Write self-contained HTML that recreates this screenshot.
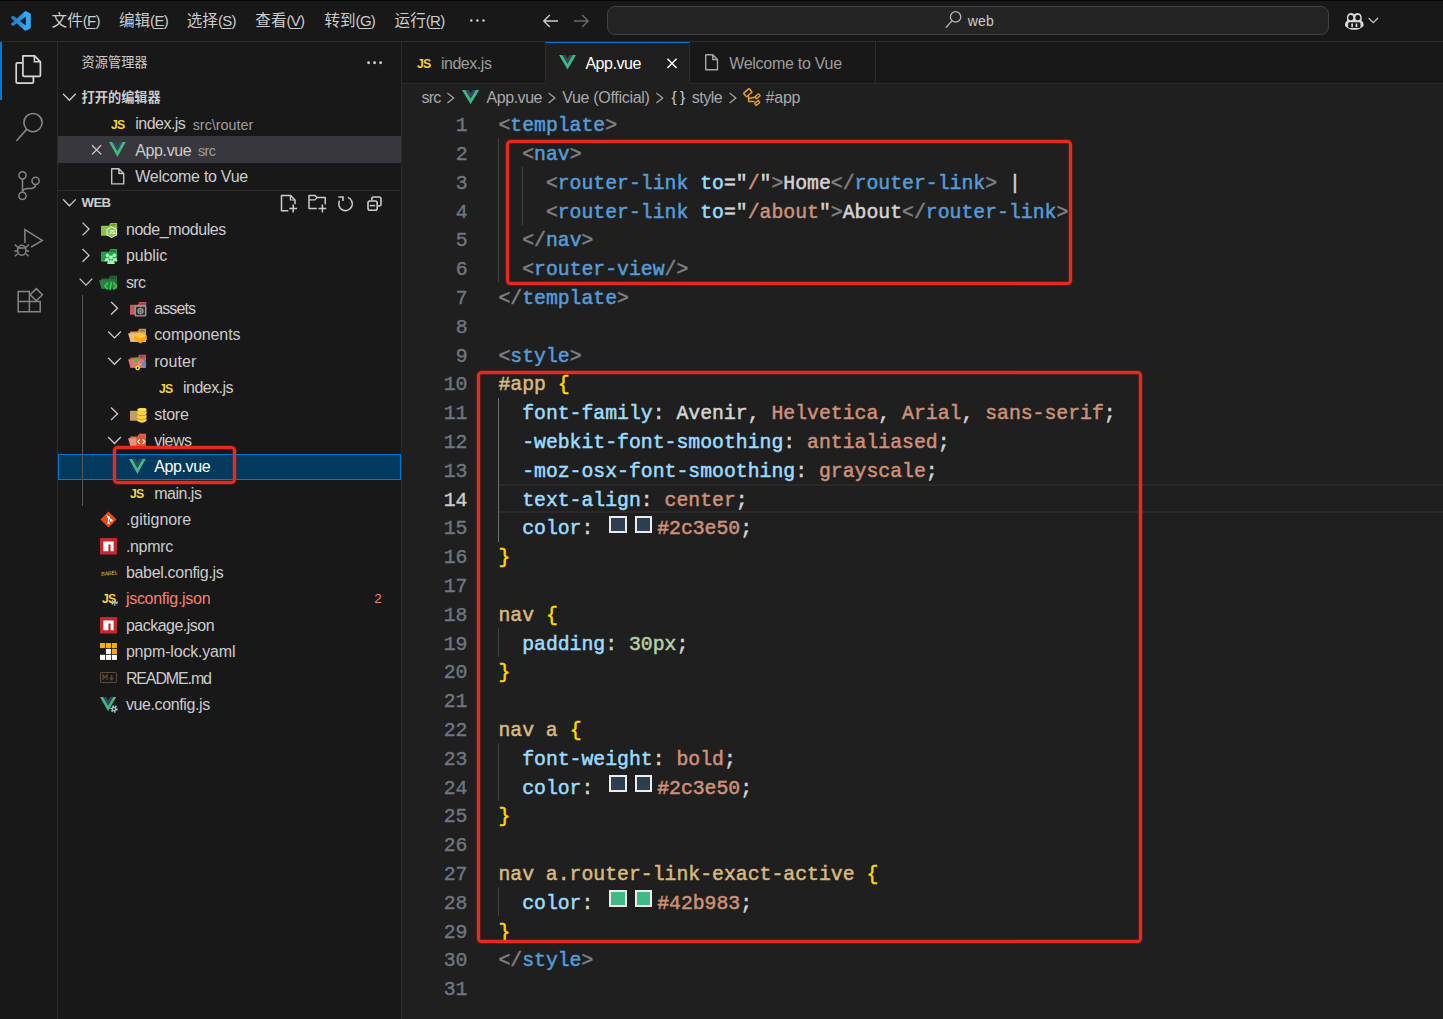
<!DOCTYPE html>
<html lang="zh-CN">
<head>
<meta charset="utf-8">
<title>App.vue - web - Visual Studio Code</title>
<style>
*{box-sizing:border-box}
html,body{margin:0;padding:0;background:#1f1f1f}
body{width:1443px;height:1019px;overflow:hidden;position:relative;font-family:"Liberation Sans","Noto Sans CJK SC",sans-serif;color:#ccc;font-size:15.2px;line-height:1}
.abs{position:absolute}
svg{display:block;overflow:visible;position:absolute}
#titlebar{position:absolute;left:0;top:0;width:1443px;height:42px;background:#181818;border-bottom:1px solid #2b2b2b;border-top:1px solid #050505}
.menu{position:absolute;top:0;height:40px;line-height:40.6px;font-size:15.6px;color:#ccc;white-space:nowrap}
.menu u{text-decoration-thickness:1px;text-underline-offset:2px}
#search{position:absolute;left:607px;top:5px;width:722px;height:29px;border:1px solid #424242;border-radius:8px;background:#242424}
#activity{position:absolute;left:0;top:42px;width:58px;height:977px;background:#181818;border-right:1px solid #2b2b2b}
#sidebar{position:absolute;left:58px;top:42px;width:344px;height:977px;background:#181818;border-right:1px solid #2b2b2b}
.row{position:absolute;left:0;width:343px;height:26.4px;line-height:28.4px;white-space:nowrap;color:#ccc}
.row span{position:absolute;top:0}
.row .desc{color:#9d9d9d;top:.7px}
.hdr{font-weight:bold;font-size:13.2px;color:#ccc}
#tabs{position:absolute;left:402px;top:42px;width:1041px;height:42px;background:#181818;border-bottom:1px solid #2b2b2b}
.tab{position:absolute;top:0;height:42px;border-right:1px solid #2b2b2b;border-bottom:1px solid #2b2b2b;line-height:43.4px;color:#9d9d9d;white-space:nowrap}
.tab span{position:absolute;top:0}
.tab.active{background:#1f1f1f;color:#fff;border-top:1px solid #0078d4;border-bottom:none;line-height:41.4px}
#crumbs{position:absolute;left:402px;top:84px;width:1041px;height:26px;background:#1f1f1f;color:#a9a9a9;line-height:27.4px;white-space:nowrap}
#crumbs span{position:absolute;top:0}
#code{position:absolute;left:402px;top:109.6px;width:1041px;height:910px;font-family:"Liberation Mono","DejaVu Sans Mono",monospace;font-size:19.8px}
.ln{-webkit-text-stroke:0.4px;position:absolute;left:0;width:65.5px;text-align:right;height:28.8px;line-height:28.8px;color:#6e7681}
.cl{-webkit-text-stroke:0.5px;position:absolute;left:96.4px;height:28.8px;line-height:28.8px;white-space:pre;color:#d4d4d4}
.g{color:#808080}.t{color:#569cd6}.a{color:#9cdcfe}.s{color:#ce9178}.y{color:#ffd700}.sel{color:#d7ba7d}.n{color:#b5cea8}.w{color:#d4d4d4}
.guide{position:absolute;width:1px;background:#404040}
.redbox{position:absolute;border:3.7px solid #e8291e;border-radius:4.5px;box-shadow:0 0 0 .7px rgba(232,41,30,.35),inset 0 0 0 .7px rgba(232,41,30,.35)}
.sw{display:inline-block;width:51.9px;height:1px}
.sw i{position:absolute;display:block;width:17.4px;height:17px;border:2px solid #ececec;top:0.6px}
</style>
</head>
<body>
<div id="titlebar"><svg style="left:10.8px;top:10.4px" width="19.8" height="19.8" viewBox="0 0 24 24" ><defs><linearGradient id="vsg" x1="0" y1="0" x2="1" y2="0"><stop offset="0" stop-color="#1a7fd0"/><stop offset=".55" stop-color="#2496e4"/><stop offset=".7" stop-color="#33a9f3"/><stop offset="1" stop-color="#33a9f3"/></linearGradient></defs><path d="M23.15 2.587L18.21.21a1.494 1.494 0 0 0-1.705.29l-9.46 8.63-4.12-3.128a.999.999 0 0 0-1.276.057L.327 7.261A1 1 0 0 0 .326 8.74L3.899 12 .326 15.26a1 1 0 0 0 .001 1.479L1.65 17.94a.999.999 0 0 0 1.276.057l4.12-3.128 9.46 8.63a1.492 1.492 0 0 0 1.704.29l4.942-2.377A1.5 1.5 0 0 0 24 20.06V3.939a1.5 1.5 0 0 0-.85-1.352zm-5.146 14.861L10.826 12l7.178-5.448v10.896z" fill="url(#vsg)"/></svg><div class="menu" style="left:51.6px">文件<span style="font-size:15px;letter-spacing:-0.7px">(<u>F</u>)</span></div><div class="menu" style="left:118.9px">编辑<span style="font-size:15px;letter-spacing:-0.7px">(<u>E</u>)</span></div><div class="menu" style="left:186.7px">选择<span style="font-size:15px;letter-spacing:-0.7px">(<u>S</u>)</span></div><div class="menu" style="left:255.3px">查看<span style="font-size:15px;letter-spacing:-0.7px">(<u>V</u>)</span></div><div class="menu" style="left:324.4px">转到<span style="font-size:15px;letter-spacing:-0.7px">(<u>G</u>)</span></div><div class="menu" style="left:394.6px">运行<span style="font-size:15px;letter-spacing:-0.7px">(<u>R</u>)</span></div><svg style="left:0px;top:0px" width="1" height="1" viewBox="0 0 1 1" ><circle cx="471.3" cy="19.5" r="1.25" fill="#ccc"/><circle cx="477.4" cy="19.5" r="1.25" fill="#ccc"/><circle cx="483.5" cy="19.5" r="1.25" fill="#ccc"/></svg><svg style="left:0px;top:0px" width="1" height="1" viewBox="0 0 1 1" ><path d="M558 20 H544 M549.8 14 L543.8 20 L549.8 26" fill="none" stroke="#ccc" stroke-width="1.4"/><path d="M574 20 H588 M582.2 14 L588.2 20 L582.2 26" fill="none" stroke="#6a6a6a" stroke-width="1.4"/></svg><div id="search"></div><svg style="left:0px;top:0px" width="1" height="1" viewBox="0 0 1 1" ><circle cx="955.6" cy="15.9" r="5.2" fill="none" stroke="#b4b4b4" stroke-width="1.3"/><path d="M951.9 19.9 L945.8 26.8" stroke="#b4b4b4" stroke-width="1.3"/></svg><div class="abs" style="left:967.7px;top:0;height:40px;line-height:40px;color:#ccc;font-size:14px;letter-spacing:0.206px">web</div><svg style="left:1343.8px;top:11.4px" width="20.6" height="18" viewBox="0 0 20 17.5" ><path d="M3 8.5 Q1 9.5 1 12 V13.5 Q5 17.3 10 17.3 Q15 17.3 19 13.5 V12 Q19 9.5 17 8.5 Q17.8 3.5 15.5 1.8 Q13 0 10 2.2 Q7 0 4.5 1.8 Q2.2 3.5 3 8.5 Z" fill="#d8d8d8"/><rect x="4.3" y="3" width="4.6" height="5" rx="2" fill="#181818"/><rect x="11.1" y="3" width="4.6" height="5" rx="2" fill="#181818"/><rect x="4" y="10" width="12" height="5.6" rx="1.5" fill="#181818"/><rect x="7.1" y="11.2" width="1.6" height="3.6" fill="#d8d8d8"/><rect x="11.3" y="11.2" width="1.6" height="3.6" fill="#d8d8d8"/></svg><svg style="left:0px;top:0px" width="1" height="1" viewBox="0 0 1 1" ><path d="M1369.05 17.44 L1373.30 21.76 L1377.55 17.44" fill="none" stroke="#ccc" stroke-width="1.2" stroke-linecap="square" stroke-linejoin="miter"/></svg></div>
<div id="activity"><div class="abs" style="left:0;top:0;width:2.4px;height:57.6px;background:#0078d4"></div><svg style="left:0px;top:0px" width="1" height="1" viewBox="0 0 1 1" ><path d="M22.9 13.8 H34.6 L40.4 19.8 V33.2 Q40.4 34.4 39.2 34.4 H24.1 Q22.9 34.4 22.9 33.2 Z" fill="none" stroke="#d7d7d7" stroke-width="1.7" stroke-linejoin="round"/><path d="M34.4 13.8 V19.8 H40.4" fill="none" stroke="#d7d7d7" stroke-width="1.5"/><path d="M22.6 20.8 H17.4 Q16.2 20.8 16.2 22 V39.9 Q16.2 41.1 17.4 41.1 H32.2 Q33.4 41.1 33.4 39.9 V34.4" fill="none" stroke="#d7d7d7" stroke-width="1.7"/></svg><svg style="left:0px;top:0px" width="1" height="1" viewBox="0 0 1 1" ><circle cx="33" cy="80.6" r="9.1" fill="none" stroke="#868686" stroke-width="1.6"/><path d="M26.6 87.4 L16.4 99" stroke="#868686" stroke-width="1.6"/></svg><svg style="left:0px;top:0px" width="1" height="1" viewBox="0 0 1 1" ><circle cx="22.5" cy="133.3" r="3.6" fill="none" stroke="#868686" stroke-width="1.5"/><circle cx="22.5" cy="153.8" r="3.6" fill="none" stroke="#868686" stroke-width="1.5"/><circle cx="35.6" cy="138.8" r="3.6" fill="none" stroke="#868686" stroke-width="1.5"/><path d="M22.5 136.9 V150.2 M35.6 142.4 Q35.6 146.6 29 146.6 Q22.5 146.6 22.5 150.2" fill="none" stroke="#868686" stroke-width="1.5"/></svg><svg style="left:0px;top:0px" width="1" height="1" viewBox="0 0 1 1" ><path d="M24.9 201 V187.6 L42.3 198.4 L31 205.2" fill="none" stroke="#868686" stroke-width="1.5" stroke-linejoin="miter"/><ellipse cx="21.8" cy="208.3" rx="4.2" ry="5" fill="none" stroke="#868686" stroke-width="1.5"/><path d="M17.6 206 H26 M17.6 205.2 L14.8 202.6 M26 205.2 L28.8 202.6 M17.4 209 H14.4 M26.2 209 H29.2 M17.8 211.8 L14.8 214.2 M25.8 211.8 L28.8 214.2" fill="none" stroke="#868686" stroke-width="1.4"/></svg><svg style="left:0px;top:0px" width="1" height="1" viewBox="0 0 1 1" ><path d="M18.2 249.4 H29.4 V259.6 H40.2 V269.8 H18.2 Z M18.2 259.6 H29.4 V269.8" fill="none" stroke="#868686" stroke-width="1.5"/><path d="M36.3 246.6 L42.4 252.7 L36.3 258.8 L30.2 252.7 Z" fill="none" stroke="#868686" stroke-width="1.5"/></svg></div>
<div id="sidebar"><div class="abs" style="left:23.6px;top:0;height:42px;line-height:41px;font-size:13.2px;color:#ccc">资源管理器</div><svg style="left:0px;top:0px" width="1" height="1" viewBox="0 0 1 1" ><circle cx="310.6" cy="20.7" r="1.45" fill="#ccc"/><circle cx="316.6" cy="20.7" r="1.45" fill="#ccc"/><circle cx="322.6" cy="20.7" r="1.45" fill="#ccc"/></svg><div class="abs" style="left:0;top:94px;width:343px;height:26.6px;background:#37373d"></div><div class="abs" style="left:0;top:411.8px;width:343px;height:26px;background:#04395e;border:1px solid #0078d4"></div><div class="abs" style="left:0;top:147.6px;width:343px;height:1px;background:#2b2b2b"></div><div class="abs" style="left:24.4px;top:253.0px;width:1px;height:211.2px;background:#585858"></div><svg style="left:0px;top:0px" width="1" height="1" viewBox="0 0 1 1" ><path d="M5.50 52.20 L11.40 58.20 L17.30 52.20" fill="none" stroke="#ccc" stroke-width="1.3" stroke-linecap="square" stroke-linejoin="miter"/></svg><div class="row " style="top:41.8px"><span class="hdr" style="left:23.6px">打开的编辑器</span></div><div class="row " style="top:68.2px"><span class="abs" style="left:52.7px;top:6.7px;height:16px;line-height:16px;font-weight:bold;font-size:13.4px;letter-spacing:-0.9px;color:#f5d33d;transform:scaleX(.92);transform-origin:0 0">JS</span><span class="" style="left:77.3px;font-size:16px;letter-spacing:-0.531px">index.js</span><span class="desc" style="left:134.7px;font-size:14.4px;letter-spacing:-0.012px">src\router</span></div><svg style="left:0px;top:0px" width="1" height="1" viewBox="0 0 1 1" ><path d="M34.00 103.20 L43.20 112.40 M43.20 103.20 L34.00 112.40" stroke="#ccc" stroke-width="1.3" fill="none"/></svg><svg style="left:51.2px;top:99.89999999999999px" width="16.8" height="15" viewBox="0 0 100 86" preserveAspectRatio="none"><path d="M0 0 L50 86 L100 0 L80 0 L50 52 L20 0 Z" fill="#41b883"/><path d="M20 0 L50 52 L80 0 L62 0 L50 21 L38 0 Z" fill="#35495e"/></svg><div class="row " style="top:94.6px"><span class="" style="left:77.3px;font-size:16px;letter-spacing:-0.387px">App.vue</span><span class="desc" style="left:140px;font-size:14.4px;letter-spacing:-0.632px">src</span></div><svg style="left:52.9px;top:125.79999999999998px" width="13.4" height="16.6" viewBox="0 0 13.4 16.6" ><path d="M0.7 0.7 H7.88 L12.7 5.52 V15.9 H0.7 Z M7.88 0.7 V5.52 H12.7" fill="none" stroke="#c5c5c5" stroke-width="1.4" stroke-linejoin="round"/></svg><div class="row " style="top:121.0px"><span class="" style="left:77.3px;font-size:16px;letter-spacing:-0.279px">Welcome to Vue</span></div><svg style="left:0px;top:0px" width="1" height="1" viewBox="0 0 1 1" ><path d="M5.50 157.80 L11.40 163.80 L17.30 157.80" fill="none" stroke="#ccc" stroke-width="1.3" stroke-linecap="square" stroke-linejoin="miter"/></svg><div class="row " style="top:147.4px"><span class="hdr" style="left:23.6px;font-size:13.2px;letter-spacing:-0.665px">WEB</span></div><svg style="left:0px;top:0px" width="1" height="1" viewBox="0 0 1 1" ><path d="M230.4 168.79999999999998 H223.5 V153.4 H232.4 L237 158.0 V162.2" fill="none" stroke="#ccc" stroke-width="1.5" stroke-linejoin="round"/><path d="M232.4 153.4 V158.0 H237" fill="none" stroke="#ccc" stroke-width="1.2"/><path d="M235.2 162.6 V170.4 M231.3 166.5 H239.1" stroke="#ccc" stroke-width="1.5"/></svg><svg style="left:0px;top:0px" width="1" height="1" viewBox="0 0 1 1" ><path d="M258.8 166.4 H251 V153.4 H257 L259 155.6 H267.2 V162.2" fill="none" stroke="#ccc" stroke-width="1.5" stroke-linejoin="round"/><path d="M251 157.79999999999998 H257 L259 155.6" fill="none" stroke="#ccc" stroke-width="1.2"/><path d="M264.4 162.6 V170.4 M260.5 166.5 H268.3" stroke="#ccc" stroke-width="1.5"/></svg><svg style="left:0px;top:0px" width="1" height="1" viewBox="0 0 1 1" ><path d="M289.8 155.4 A6.8 6.8 0 1 1 281.5 158.6" fill="none" stroke="#ccc" stroke-width="1.5"/><path d="M280.4 154.9 H285 V159.0" fill="none" stroke="#ccc" stroke-width="1.5"/></svg><svg style="left:0px;top:0px" width="1" height="1" viewBox="0 0 1 1" ><rect x="310" y="159" width="9.2" height="9.2" rx="2" fill="none" stroke="#ccc" stroke-width="1.6"/><path d="M311.8 163.6 H317.2" stroke="#ccc" stroke-width="1.5"/><path d="M313.8 158.6 V157 Q313.8 155 315.8 155 H321 Q323 155 323 157 V162 Q323 164 321 164 H319.8" fill="none" stroke="#ccc" stroke-width="1.6"/></svg><svg style="left:0px;top:0px" width="1" height="1" viewBox="0 0 1 1" ><path d="M25.00 181.10 L31.00 187.00 L25.00 192.90" fill="none" stroke="#ccc" stroke-width="1.3" stroke-linecap="square" stroke-linejoin="miter"/></svg><div class="row " style="top:173.8px"><span class="" style="left:67.9px;font-size:16px;letter-spacing:-0.414px">node_modules</span></div><svg style="left:43.1px;top:187.0px" width="1" height="1" viewBox="0 0 1 1" ><path d="M0.5 -3.2 H7.8 L9.4 -6 H15.7 Q16.2 -6 16.2 -5.5 V6.3 Q16.2 6.8 15.7 6.8 H0.5 Q0 6.8 0 6.3 V-2.7 Q0 -3.2 0.5 -3.2 Z" fill="#8bc34a"/><path d="M10.1 -5 H15.2 V-3.2 H9.1 Z" fill="rgba(0,0,0,.22)"/><path d="M10.7 -2.2 L15.4 0.5 V5.9 L10.7 8.6 L6 5.9 V0.5 Z" fill="#8bc34a" stroke="#eef6e4" stroke-width="1"/><text x="7.9" y="5.2" font-size="5.2" font-weight="bold" fill="#f4faee" font-family="Liberation Sans,sans-serif">JS</text></svg><svg style="left:0px;top:0px" width="1" height="1" viewBox="0 0 1 1" ><path d="M25.00 207.50 L31.00 213.40 L25.00 219.30" fill="none" stroke="#ccc" stroke-width="1.3" stroke-linecap="square" stroke-linejoin="miter"/></svg><div class="row " style="top:200.2px"><span class="" style="left:67.9px;font-size:16px;letter-spacing:-0.101px">public</span></div><svg style="left:43.1px;top:213.4px" width="1" height="1" viewBox="0 0 1 1" ><path d="M0.5 -3.2 H7.8 L9.4 -6 H15.7 Q16.2 -6 16.2 -5.5 V6.3 Q16.2 6.8 15.7 6.8 H0.5 Q0 6.8 0 6.3 V-2.7 Q0 -3.2 0.5 -3.2 Z" fill="#22a04b"/><path d="M10.1 -5 H15.2 V-3.2 H9.1 Z" fill="rgba(0,0,0,.22)"/><circle cx="6.5" cy="0.3" r="1.9" fill="#a5f3b8"/><circle cx="13.4" cy="0.3" r="1.9" fill="#a5f3b8"/><circle cx="10" cy="2.6" r="2.1" fill="#a5f3b8"/><path d="M3.6 6.2 Q3.8 2.8 6.5 2.8 Q8 3 8 5 L8 6.2 Z M16.3 6.2 Q16.1 2.8 13.4 2.8 Q12 3 12 5 L12 6.2 Z M6.2 8.9 Q6.4 5.2 10 5.2 Q13.6 5.2 13.8 8.9 Z" fill="#a5f3b8"/></svg><svg style="left:0px;top:0px" width="1" height="1" viewBox="0 0 1 1" ><path d="M22.10 237.10 L28.00 243.10 L33.90 237.10" fill="none" stroke="#ccc" stroke-width="1.3" stroke-linecap="square" stroke-linejoin="miter"/></svg><div class="row " style="top:226.6px"><span class="" style="left:67.9px;font-size:16px;letter-spacing:-0.643px">src</span></div><svg style="left:41.2px;top:239.8px" width="1" height="1" viewBox="0 0 1 1" ><path d="M2.2 -3.4 H9.6 L11.2 -6.3 H18 V6.8 H2.2 Z" fill="#256a3a"/><path d="M11.9 -5.3 H17 V-3.4 H10.9 Z" fill="rgba(0,0,0,.22)"/><path d="M0 -1.8 H15.6 L18 6.8 H2.6 Z" fill="#2e7d46"/><path d="M9 0.8 L5.9 4.1 L9 7.4 M14.4 0.8 L17.5 4.1 L14.4 7.4 M12.4 0.2 L11 8" fill="none" stroke="#2fd64a" stroke-width="1.5"/></svg><svg style="left:0px;top:0px" width="1" height="1" viewBox="0 0 1 1" ><path d="M53.50 260.30 L59.50 266.20 L53.50 272.10" fill="none" stroke="#ccc" stroke-width="1.3" stroke-linecap="square" stroke-linejoin="miter"/></svg><div class="row " style="top:253.0px"><span class="" style="left:96.2px;font-size:16px;letter-spacing:-0.874px">assets</span></div><svg style="left:72px;top:266.2px" width="1" height="1" viewBox="0 0 1 1" ><path d="M0.5 -3.2 H7.8 L9.4 -6 H15.7 Q16.2 -6 16.2 -5.5 V6.3 Q16.2 6.8 15.7 6.8 H0.5 Q0 6.8 0 6.3 V-2.7 Q0 -3.2 0.5 -3.2 Z" fill="#c65a5a"/><path d="M10.1 -5 H15.2 V-3.2 H9.1 Z" fill="rgba(0,0,0,.22)"/><rect x="5.2" y="-2" width="10.5" height="9.9" rx="1" fill="#303030" stroke="#a0a0a0" stroke-width="1.3"/><circle cx="10.5" cy="3" r="2.5" fill="none" stroke="#a0a0a0" stroke-width="1.1"/><circle cx="10.5" cy="3" r=".8" fill="#a0a0a0"/><path d="M10.5 -0.6 V6.6 M6.9 3 H14.1 M8 0.5 L13 5.5 M13 0.5 L8 5.5" stroke="#a0a0a0" stroke-width=".5"/></svg><svg style="left:0px;top:0px" width="1" height="1" viewBox="0 0 1 1" ><path d="M50.60 289.90 L56.50 295.90 L62.40 289.90" fill="none" stroke="#ccc" stroke-width="1.3" stroke-linecap="square" stroke-linejoin="miter"/></svg><div class="row " style="top:279.4px"><span class="" style="left:96.2px;font-size:16px;letter-spacing:-0.097px">components</span></div><svg style="left:70.1px;top:292.6px" width="1" height="1" viewBox="0 0 1 1" ><path d="M2.2 -3.4 H9.6 L11.2 -6.3 H18 V6.8 H2.2 Z" fill="#d89c52"/><path d="M11.9 -5.3 H17 V-3.4 H10.9 Z" fill="rgba(0,0,0,.22)"/><path d="M0 -1.8 H15.6 L18 6.8 H2.6 Z" fill="#f2bb74"/><path d="M12.4 -2.6 L18.8 0.6 L12.4 3.8 L6.1 0.6 Z" fill="#ffc533"/><path d="M6.1 0.6 L12.4 3.8 L18.8 0.6 V4.8 L12.4 8.4 L6.1 4.8 Z" fill="#f7a516"/><ellipse cx="10.6" cy="-0.4" rx="1.5" ry=".8" fill="#ffd166"/><ellipse cx="14.2" cy="-0.4" rx="1.5" ry=".8" fill="#ffd166"/></svg><svg style="left:0px;top:0px" width="1" height="1" viewBox="0 0 1 1" ><path d="M50.60 316.30 L56.50 322.30 L62.40 316.30" fill="none" stroke="#ccc" stroke-width="1.3" stroke-linecap="square" stroke-linejoin="miter"/></svg><div class="row " style="top:305.8px"><span class="" style="left:96.2px;font-size:16px;letter-spacing:0.067px">router</span></div><svg style="left:70.3px;top:319.0px" width="1" height="1" viewBox="0 0 1 1" ><path d="M2.2 -3.4 H9.6 L11.2 -6.3 H18 V6.8 H2.2 Z" fill="#c85a5a"/><path d="M11.9 -5.3 H17 V-3.4 H10.9 Z" fill="rgba(0,0,0,.22)"/><path d="M0 -1.8 H15.6 L18 6.8 H2.6 Z" fill="#e57373"/><path d="M8.3 -1.1 L11.6 3.4 L16.1 3.1 M11.6 3.4 L9.6 6.9" fill="none" stroke="#f0a8a8" stroke-width="1"/><circle cx="8.3" cy="-1.1" r="2.4" fill="#4ec22c"/><circle cx="16.1" cy="3.1" r="2.3" fill="#3f8ee8"/><circle cx="9.6" cy="6.9" r="1.6" fill="#181818" stroke="#f5dc2e" stroke-width="1.5"/></svg><div class="row " style="top:332.2px"><span class="" style="left:125.0px;font-size:16px;letter-spacing:-0.531px">index.js</span></div><div class="row" style="top:332.2px"><span class="abs" style="left:100.8px;top:6.7px;height:16px;line-height:16px;font-weight:bold;font-size:13.4px;letter-spacing:-0.9px;color:#f5d33d;transform:scaleX(.92);transform-origin:0 0">JS</span></div><svg style="left:0px;top:0px" width="1" height="1" viewBox="0 0 1 1" ><path d="M53.50 365.90 L59.50 371.80 L53.50 377.70" fill="none" stroke="#ccc" stroke-width="1.3" stroke-linecap="square" stroke-linejoin="miter"/></svg><div class="row " style="top:358.6px"><span class="" style="left:96.2px;font-size:16px;letter-spacing:-0.234px">store</span></div><svg style="left:72.4px;top:371.8px" width="1" height="1" viewBox="0 0 1 1" ><path d="M0.5 -3.2 H7.8 L9.4 -6 H15.7 Q16.2 -6 16.2 -5.5 V6.3 Q16.2 6.8 15.7 6.8 H0.5 Q0 6.8 0 6.3 V-2.7 Q0 -3.2 0.5 -3.2 Z" fill="#c69c5a"/><path d="M10.1 -5 H15.2 V-3.2 H9.1 Z" fill="rgba(0,0,0,.22)"/><ellipse cx="11.9" cy="-4.2" rx="4.6" ry="1.9" fill="#ffe14d"/><path d="M7.3 -3 Q11.9 -0.4 16.5 -3 V-0.2 Q11.9 2.4 7.3 -0.2 Z M7.3 0.9 Q11.9 3.5 16.5 0.9 V3.7 Q11.9 6.3 7.3 3.7 Z M7.3 4.8 Q11.9 7.4 16.5 4.8 V6.9 Q11.9 10.4 7.3 6.9 Z" fill="#fdd835"/></svg><svg style="left:0px;top:0px" width="1" height="1" viewBox="0 0 1 1" ><path d="M50.60 395.50 L56.50 401.50 L62.40 395.50" fill="none" stroke="#ccc" stroke-width="1.3" stroke-linecap="square" stroke-linejoin="miter"/></svg><div class="row " style="top:385.0px"><span class="" style="left:96.2px;font-size:16px;letter-spacing:-0.562px">views</span></div><svg style="left:70.3px;top:398.2px" width="1" height="1" viewBox="0 0 1 1" ><path d="M2.2 -3.4 H9.6 L11.2 -6.3 H18 V6.8 H2.2 Z" fill="#cf7560"/><path d="M11.9 -5.3 H17 V-3.4 H10.9 Z" fill="rgba(0,0,0,.22)"/><path d="M0 -1.8 H15.6 L18 6.8 H2.6 Z" fill="#e8907a"/><path d="M9.2 -3.2 H10.4 L11.4 -5.2 H17 V-3.2 H17.4 Q18 -3.2 18 -2.6 V6.8 H8.2 V-2.2 Q8.2 -3.2 9.2 -3.2 Z" fill="#e9562a"/><path d="M11.8 -0.6 L9.6 1.6 L11.8 3.8 M14.6 -0.6 L16.8 1.6 L14.6 3.8" fill="none" stroke="#fff" stroke-width="1.2"/></svg><div class="row " style="top:411.4px"><span class="" style="left:96.2px;font-size:16px;letter-spacing:-0.387px;color:#fff">App.vue</span></div><svg style="left:71.3px;top:416.5px" width="16.8" height="15" viewBox="0 0 100 86" preserveAspectRatio="none"><path d="M0 0 L50 86 L100 0 L80 0 L50 52 L20 0 Z" fill="#41b883"/><path d="M20 0 L50 52 L80 0 L62 0 L50 21 L38 0 Z" fill="#35495e"/></svg><div class="row " style="top:437.8px"><span class="" style="left:96.2px;font-size:16px;letter-spacing:-0.497px">main.js</span></div><div class="row" style="top:437.8px"><span class="abs" style="left:72.3px;top:6.7px;height:16px;line-height:16px;font-weight:bold;font-size:13.4px;letter-spacing:-0.9px;color:#f5d33d;transform:scaleX(.92);transform-origin:0 0">JS</span></div><div class="row " style="top:464.2px"><span class="" style="left:67.9px;font-size:16px;letter-spacing:-0.052px">.gitignore</span></div><svg style="left:42.2px;top:469.0px" width="17" height="17" viewBox="0 0 17 17" ><path d="M8.5 0.4 L16.6 8.5 L8.5 16.6 L0.4 8.5 Z" fill="#e64a19"/><path d="M6.8 4.4 L8.6 6.2 V12 M8.6 6.6 L11.2 9.2" fill="none" stroke="#fff" stroke-width="1.1"/><circle cx="8.6" cy="6.2" r="1.2" fill="#fff"/><circle cx="8.6" cy="12" r="1.2" fill="#fff"/><circle cx="11.4" cy="9.4" r="1.2" fill="#fff"/></svg><div class="row " style="top:490.6px"><span class="" style="left:67.9px;font-size:16px;letter-spacing:-0.317px">.npmrc</span></div><svg style="left:42.2px;top:495.5px" width="17" height="16.6" viewBox="0 0 17 16.6" ><rect x="0" y="0" width="17" height="16.6" rx=".4" fill="#c4282f"/><path d="M3.4 13.2 V3.6 H13.6 V13.2 H10.6 V6.6 H8.4 V13.2 Z" fill="#fff"/></svg><div class="row " style="top:517.0px"><span class="" style="left:67.9px;font-size:16px;letter-spacing:-0.313px">babel.config.js</span></div><div class="row" style="top:517.0px"><span style="left:42.6px;font-size:5.3px;font-style:italic;color:#e6c738;letter-spacing:-.1px;transform:rotate(-6deg)">BABEL</span></div><div class="row " style="top:543.4px"><span class="" style="left:67.9px;font-size:16px;letter-spacing:-0.281px;color:#f88070">jsconfig.json</span></div><div class="row" style="top:543.4px"><span class="abs" style="left:43.6px;top:5.7px;height:16px;line-height:16px;font-weight:bold;font-size:13.4px;letter-spacing:-0.9px;color:#f5d33d;transform:scaleX(.92);transform-origin:0 0">JS</span><span style="left:316.2px;color:#f88070;font-size:13.6px">2</span></div><svg style="left:52.6px;top:557.0px" width="7" height="7" viewBox="0 0 7 7" ><circle cx="3.5" cy="3.5" r="2.3" fill="none" stroke="#9fb4bd" stroke-width="2" stroke-dasharray="1.3 1.1"/><circle cx="3.5" cy="3.5" r="1.6" fill="#9fb4bd"/></svg><div class="row " style="top:569.8px"><span class="" style="left:67.9px;font-size:16px;letter-spacing:-0.508px">package.json</span></div><svg style="left:42.2px;top:574.7px" width="17" height="16.6" viewBox="0 0 17 16.6" ><rect x="0" y="0" width="17" height="16.6" rx=".4" fill="#c4282f"/><path d="M3.4 13.2 V3.6 H13.6 V13.2 H10.6 V6.6 H8.4 V13.2 Z" fill="#fff"/></svg><div class="row " style="top:596.2px"><span class="" style="left:67.9px;font-size:16px;letter-spacing:-0.188px">pnpm-lock.yaml</span></div><svg style="left:42.2px;top:600.9px" width="17" height="17" viewBox="0 0 17 17" ><rect x="0.0" y="0.0" width="5.1" height="5.1" fill="#f9ad00"/><rect x="5.9" y="0.0" width="5.1" height="5.1" fill="#f9ad00"/><rect x="11.8" y="0.0" width="5.1" height="5.1" fill="#f9ad00"/><rect x="5.9" y="5.9" width="5.1" height="5.1" fill="#fff"/><rect x="11.8" y="5.9" width="5.1" height="5.1" fill="#f9ad00"/><rect x="0.0" y="11.8" width="5.1" height="5.1" fill="#fff"/><rect x="5.9" y="11.8" width="5.1" height="5.1" fill="#fff"/><rect x="11.8" y="11.8" width="5.1" height="5.1" fill="#fff"/></svg><div class="row " style="top:622.6px"><span class="" style="left:67.9px;font-size:16px;letter-spacing:-1.125px">README.md</span></div><svg style="left:42.2px;top:630.1999999999999px" width="17" height="11" viewBox="0 0 17 11" ><rect x=".5" y=".5" width="16" height="10" rx="1.2" fill="none" stroke="#5a4838" stroke-width="1.2"/><path d="M3 8 V3 L5 5.6 L7 3 V8 M11.6 3 V7.6 M9.8 5.8 L11.6 7.8 L13.4 5.8" fill="none" stroke="#5a4838" stroke-width="1.3"/></svg><div class="row " style="top:649.0px"><span class="" style="left:67.9px;font-size:16px;letter-spacing:-0.38px">vue.config.js</span></div><svg style="left:42.4px;top:655.0px" width="16.2" height="14.2" viewBox="0 0 100 86" preserveAspectRatio="none"><path d="M0 0 L50 86 L100 0 L80 0 L50 52 L20 0 Z" fill="#41b883"/><path d="M20 0 L50 52 L80 0 L62 0 L50 21 L38 0 Z" fill="#35495e"/></svg><svg style="left:52px;top:662.8000000000001px" width="8" height="8" viewBox="0 0 8 8" ><circle cx="4" cy="4" r="2.6" fill="none" stroke="#a9bcc4" stroke-width="2.2" stroke-dasharray="1.4 1.2"/><circle cx="4" cy="4" r="2.4" fill="#a9bcc4"/><circle cx="4" cy="4" r="1" fill="#181818"/></svg><div class="redbox" style="left:55.4px;top:404.2px;width:123.1px;height:37.7px;border-width:3.1px"></div></div>
<div id="tabs"><div class="tab" style="left:0;width:144px"><span class="abs" style="left:14.6px;top:13.5px;height:16px;line-height:16px;font-weight:bold;font-size:13.4px;letter-spacing:-0.9px;color:#f5d33d;transform:scaleX(.92);transform-origin:0 0">JS</span><span style="left:38.9px;font-size:16px;letter-spacing:-0.456px">index.js</span></div><div class="tab active" style="left:144px;width:144px"><svg style="left:13.2px;top:12.4px" width="17" height="14.6" viewBox="0 0 100 86" preserveAspectRatio="none"><path d="M0 0 L50 86 L100 0 L80 0 L50 52 L20 0 Z" fill="#41b883"/><path d="M20 0 L50 52 L80 0 L62 0 L50 21 L38 0 Z" fill="#35495e"/></svg><span style="left:39.4px;font-size:16px;letter-spacing:-0.445px">App.vue</span><svg style="left:0px;top:0px" width="1" height="1" viewBox="0 0 1 1" ><path d="M121.40 15.80 L130.60 25.00 M130.60 15.80 L121.40 25.00" stroke="#fff" stroke-width="1.4" fill="none"/></svg></div><div class="tab" style="left:288px;width:186px"><svg style="left:14.9px;top:12.2px" width="13.2" height="16.4" viewBox="0 0 13.2 16.4" ><path d="M0.7 0.7 H7.75 L12.5 5.45 V15.7 H0.7 Z M7.75 0.7 V5.45 H12.5" fill="none" stroke="#a6a6a6" stroke-width="1.4" stroke-linejoin="round"/></svg><span style="left:39.2px;font-size:16px;letter-spacing:-0.279px">Welcome to Vue</span></div></div>
<div id="crumbs"><span style="left:19.5px;font-size:16px;letter-spacing:-0.776px">src</span><svg style="left:0px;top:0px" width="1" height="1" viewBox="0 0 1 1" ><path d="M45.90 9.40 L51.70 14.00 L45.90 18.60" fill="none" stroke="#a9a9a9" stroke-width="1.2" stroke-linecap="square" stroke-linejoin="miter"/></svg><svg style="left:0px;top:0px" width="1" height="1" viewBox="0 0 1 1" ><path d="M147.10 9.40 L152.90 14.00 L147.10 18.60" fill="none" stroke="#a9a9a9" stroke-width="1.2" stroke-linecap="square" stroke-linejoin="miter"/></svg><svg style="left:0px;top:0px" width="1" height="1" viewBox="0 0 1 1" ><path d="M254.90 9.40 L260.70 14.00 L254.90 18.60" fill="none" stroke="#a9a9a9" stroke-width="1.2" stroke-linecap="square" stroke-linejoin="miter"/></svg><svg style="left:0px;top:0px" width="1" height="1" viewBox="0 0 1 1" ><path d="M328.10 9.40 L333.90 14.00 L328.10 18.60" fill="none" stroke="#a9a9a9" stroke-width="1.2" stroke-linecap="square" stroke-linejoin="miter"/></svg><svg style="left:59.6px;top:6.2px" width="17.2" height="14.2" viewBox="0 0 100 86" preserveAspectRatio="none"><path d="M0 0 L50 86 L100 0 L80 0 L50 52 L20 0 Z" fill="#41b883"/><path d="M20 0 L50 52 L80 0 L62 0 L50 21 L38 0 Z" fill="#35495e"/></svg><span style="left:84.6px;font-size:16px;letter-spacing:-0.473px">App.vue</span><span style="left:160.2px;font-size:16px;letter-spacing:-0.306px">Vue (Official)</span><span style="left:269.6px;font-size:15.4px;letter-spacing:3.2px;color:#ccc;top:-0.6px">{}</span><span style="left:289.8px;font-size:16px;letter-spacing:-0.5px">style</span><svg style="left:341px;top:3.9px" width="18" height="18" viewBox="0 0 18 18" ><rect x="1.1" y="2.4" width="7.4" height="4.6" rx=".6" fill="none" stroke="#ee9d28" stroke-width="1.5" transform="rotate(-40 4.8 4.7)"/><path d="M5.4 7.8 L5.8 13.4 H11.6 M5.6 10.6 L12 9.2" fill="none" stroke="#ee9d28" stroke-width="1.5"/><rect x="12.2" y="7" width="4.8" height="2.6" rx=".5" fill="none" stroke="#ee9d28" stroke-width="1.4" transform="rotate(-40 14.6 8.3)"/><rect x="11.8" y="13.6" width="4.8" height="2.6" rx=".5" fill="none" stroke="#ee9d28" stroke-width="1.4" transform="rotate(-40 14.2 14.9)"/></svg><span style="left:363.6px;font-size:16px;letter-spacing:-0.249px">#app</span></div>
<div id="code"><div class="abs" style="left:96.4px;top:374.8px;width:944.6px;height:28.8px;border-top:2px solid #292929;border-bottom:2px solid #292929"></div><div class="ln" style="top:2.6px">1</div><div class="cl" style="top:2.6px"><span class="g">&lt;</span><span class="t">template</span><span class="g">&gt;</span></div><div class="ln" style="top:31.4px">2</div><div class="cl" style="top:31.4px">  <span class="g">&lt;</span><span class="t">nav</span><span class="g">&gt;</span></div><div class="ln" style="top:60.2px">3</div><div class="cl" style="top:60.2px">    <span class="g">&lt;</span><span class="t">router-link</span> <span class="a">to</span><span class="w">="</span><span class="s">/</span><span class="w">"</span><span class="g">&gt;</span><span class="w">Home</span><span class="g">&lt;/</span><span class="t">router-link</span><span class="g">&gt;</span><span class="w"> |</span></div><div class="ln" style="top:89.0px">4</div><div class="cl" style="top:89.0px">    <span class="g">&lt;</span><span class="t">router-link</span> <span class="a">to</span><span class="w">="</span><span class="s">/about</span><span class="w">"</span><span class="g">&gt;</span><span class="w">About</span><span class="g">&lt;/</span><span class="t">router-link</span><span class="g">&gt;</span></div><div class="ln" style="top:117.8px">5</div><div class="cl" style="top:117.8px">  <span class="g">&lt;/</span><span class="t">nav</span><span class="g">&gt;</span></div><div class="ln" style="top:146.6px">6</div><div class="cl" style="top:146.6px">  <span class="g">&lt;</span><span class="t">router-view</span><span class="g">/&gt;</span></div><div class="ln" style="top:175.4px">7</div><div class="cl" style="top:175.4px"><span class="g">&lt;/</span><span class="t">template</span><span class="g">&gt;</span></div><div class="ln" style="top:204.2px">8</div><div class="ln" style="top:233.0px">9</div><div class="cl" style="top:233.0px"><span class="g">&lt;</span><span class="t">style</span><span class="g">&gt;</span></div><div class="ln" style="top:261.8px">10</div><div class="cl" style="top:261.8px"><span class="sel">#app</span> <span class="y">{</span></div><div class="ln" style="top:290.6px">11</div><div class="cl" style="top:290.6px">  <span class="a">font-family</span><span class="w">: Avenir, </span><span class="s">Helvetica</span><span class="w">, </span><span class="s">Arial</span><span class="w">, </span><span class="s">sans-serif</span><span class="w">;</span></div><div class="ln" style="top:319.4px">12</div><div class="cl" style="top:319.4px">  <span class="a">-webkit-font-smoothing</span><span class="w">: </span><span class="s">antialiased</span><span class="w">;</span></div><div class="ln" style="top:348.2px">13</div><div class="cl" style="top:348.2px">  <span class="a">-moz-osx-font-smoothing</span><span class="w">: </span><span class="s">grayscale</span><span class="w">;</span></div><div class="ln" style="top:377.0px;color:#ccc">14</div><div class="cl" style="top:377.0px">  <span class="a">text-align</span><span class="w">: </span><span class="s">center</span><span class="w">;</span></div><div class="ln" style="top:405.8px">15</div><div class="cl" style="top:405.8px">  <span class="a">color</span><span class="w">: </span><span class="sw"><i style="left:110.8px;background:#2c3e50"></i><i style="left:136.7px;background:#2c3e50"></i></span><span class="s">#2c3e50</span><span class="w">;</span></div><div class="ln" style="top:434.6px">16</div><div class="cl" style="top:434.6px"><span class="y">}</span></div><div class="ln" style="top:463.4px">17</div><div class="ln" style="top:492.2px">18</div><div class="cl" style="top:492.2px"><span class="sel">nav</span> <span class="y">{</span></div><div class="ln" style="top:521.0px">19</div><div class="cl" style="top:521.0px">  <span class="a">padding</span><span class="w">: </span><span class="n">30px</span><span class="w">;</span></div><div class="ln" style="top:549.8px">20</div><div class="cl" style="top:549.8px"><span class="y">}</span></div><div class="ln" style="top:578.6px">21</div><div class="ln" style="top:607.4px">22</div><div class="cl" style="top:607.4px"><span class="sel">nav a</span> <span class="y">{</span></div><div class="ln" style="top:636.2px">23</div><div class="cl" style="top:636.2px">  <span class="a">font-weight</span><span class="w">: </span><span class="s">bold</span><span class="w">;</span></div><div class="ln" style="top:665.0px">24</div><div class="cl" style="top:665.0px">  <span class="a">color</span><span class="w">: </span><span class="sw"><i style="left:110.8px;background:#2c3e50"></i><i style="left:136.7px;background:#2c3e50"></i></span><span class="s">#2c3e50</span><span class="w">;</span></div><div class="ln" style="top:693.8px">25</div><div class="cl" style="top:693.8px"><span class="y">}</span></div><div class="ln" style="top:722.6px">26</div><div class="ln" style="top:751.4px">27</div><div class="cl" style="top:751.4px"><span class="sel">nav a.router-link-exact-active</span> <span class="y">{</span></div><div class="ln" style="top:780.2px">28</div><div class="cl" style="top:780.2px">  <span class="a">color</span><span class="w">: </span><span class="sw"><i style="left:110.8px;background:#42b983"></i><i style="left:136.7px;background:#42b983"></i></span><span class="s">#42b983</span><span class="w">;</span></div><div class="ln" style="top:809.0px">29</div><div class="cl" style="top:809.0px"><span class="y">}</span></div><div class="ln" style="top:837.8px">30</div><div class="cl" style="top:837.8px"><span class="g">&lt;/</span><span class="t">style</span><span class="g">&gt;</span></div><div class="ln" style="top:866.6px">31</div><div class="guide" style="left:96.1px;top:28.8px;height:144.0px;background:#404040"></div><div class="guide" style="left:119.9px;top:57.6px;height:57.6px;background:#404040"></div><div class="guide" style="left:96.1px;top:288.0px;height:144.0px;background:#707070"></div><div class="guide" style="left:96.1px;top:518.4px;height:28.8px;background:#404040"></div><div class="guide" style="left:96.1px;top:633.6px;height:57.6px;background:#404040"></div><div class="guide" style="left:96.1px;top:777.6px;height:28.8px;background:#404040"></div><div class="redbox" style="left:103.5px;top:30.2px;width:566.2px;height:145.6px"></div><div class="redbox" style="left:75.2px;top:261.8px;width:664.7px;height:571.4px"></div></div>
</body>
</html>
